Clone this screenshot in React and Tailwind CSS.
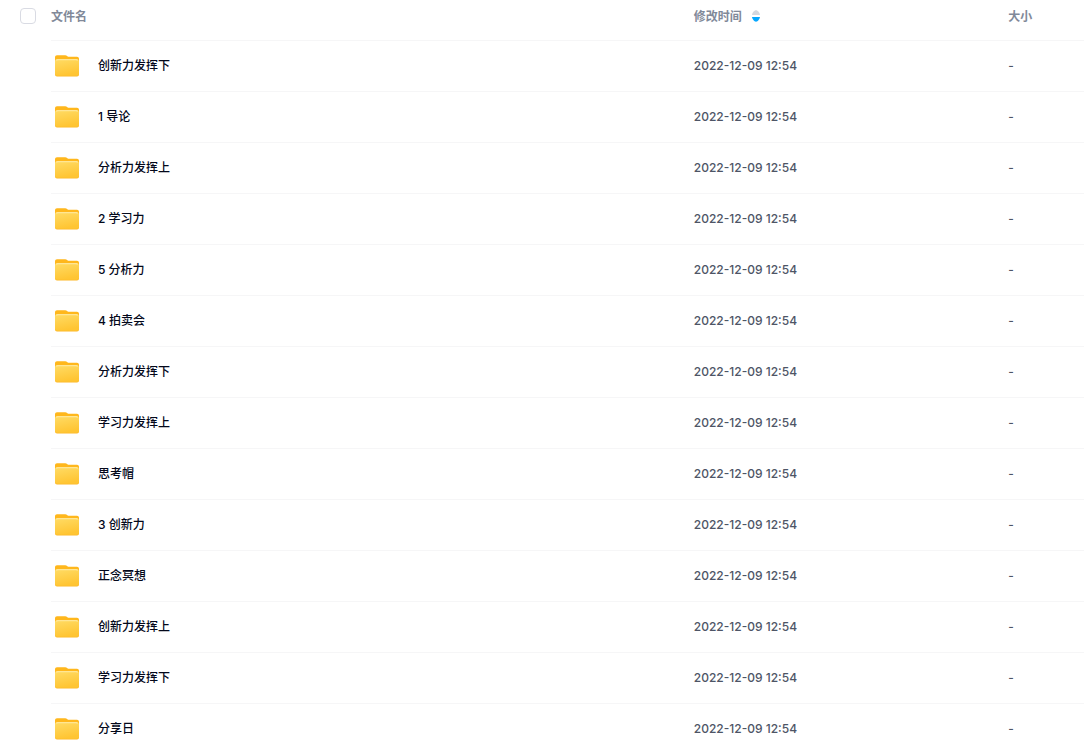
import React, { useState } from 'react';

const MODIFIED = '2022-12-09 12:54';

const files = [
    '创新力发挥下',
    '1 导论',
    '分析力发挥上',
    '2 学习力',
    '5 分析力',
    '4 拍卖会',
    '分析力发挥下',
    '学习力发挥上',
    '思考帽',
    '3 创新力',
    '正念冥想',
    '创新力发挥上',
    '学习力发挥下',
    '分享日',
].map((name, index) => ({ id: index + 1, name, modified: MODIFIED, size: '-' }));

const FolderIcon = () => (
    <svg width="24" height="22" viewBox="0 0 24 22" className="shrink-0" aria-hidden="true">
        <defs>
            <linearGradient id="folderFront" x1="0" y1="0" x2="0.3" y2="1">
                <stop offset="0" stopColor="#ffdc66" />
                <stop offset="1" stopColor="#ffc533" />
            </linearGradient>
        </defs>
        <path d="M0 2.300C0 1.100.9.200 2 .2h8.300c.6 0 1.100.2 1.500.5l.9.700c.4.300.8.400 1.300.4h8c1.100 0 2 .8 2 1.900V12H0z" fill="#ffb71c" />
        <rect y="5" width="24" height="16.500" rx="2" fill="#fdb827" />
        <path d="M0 6.200C0 5 .9 4 2 4h20c1.100 0 2 1 2 2.200V18.800c0 1.100-.9 2-2 2H2c-1.100 0-2-.9-2-2z" fill="url(#folderFront)" />
        <path d="M1.500 5.600c.2-.7.6-1 1.300-1h18.400c.7 0 1.100.3 1.300 1" fill="none" stroke="#ffe695" strokeWidth="1.200" />
    </svg>
);

const SortIcon = () => (
    <svg width="8" height="14" viewBox="0 0 8 14" aria-hidden="true">
        <path d="M0 5C.2 3 2.200.3 4 .3S7.800 3 8 5z" fill="#d4d7de" />
        <path d="M0 7c.2 2 2.200 4.700 4 4.700S7.800 9 8 7z" fill="#06a7ff" />
    </svg>
);

const App = () => {
    const [allSelected, setAllSelected] = useState(false);
    const [newestFirst, setNewestFirst] = useState(true);

    const rows = [...files].sort((a, b) => (newestFirst ? b.modified.localeCompare(a.modified) : a.modified.localeCompare(b.modified)));

    return (
        <main className="bg-white font-['Inter','Noto_Sans_CJK_SC',sans-serif] text-xs">
            <table className="w-full table-fixed border-separate border-spacing-0 text-left">
                <thead className="text-[#818999]">
                    <tr className="h-10">
                        <th className="w-[51px] pb-2 pl-5">
                            <input
                                type="checkbox"
                                aria-label="全选"
                                checked={allSelected}
                                onChange={(e) => setAllSelected(e.target.checked)}
                                className="block size-4 appearance-none rounded border border-[#d9dbe3] bg-white checked:border-[#06a7ff] checked:bg-[#06a7ff]"
                            />
                        </th>
                        <th className="w-[59.3%] pb-1.5 font-bold">文件名</th>
                        <th className="w-[29%] pb-1.5 font-bold">
                            <button type="button" onClick={() => setNewestFirst(!newestFirst)} className="flex items-center gap-2.5">
                                修改时间
                                <SortIcon />
                            </button>
                        </th>
                        <th className="pb-1.5 font-bold">大小</th>
                    </tr>
                </thead>
                <tbody className="font-medium text-[#4e5566]">
                    {rows.map((file) => (
                        <tr key={file.id} className="h-[51px]">
                            <td />
                            <td className="border-t border-[#f6f6f7] pl-1 text-[#03081a]">
                                <a href="#" className="flex items-center gap-[19px] font-medium">
                                    <FolderIcon />
                                    {file.name}
                                </a>
                            </td>
                            <td className="border-t border-[#f6f6f7]">{file.modified}</td>
                            <td className="border-t border-[#f6f6f7]">{file.size}</td>
                        </tr>
                    ))}
                </tbody>
            </table>
        </main>
    );
};

export default App;
